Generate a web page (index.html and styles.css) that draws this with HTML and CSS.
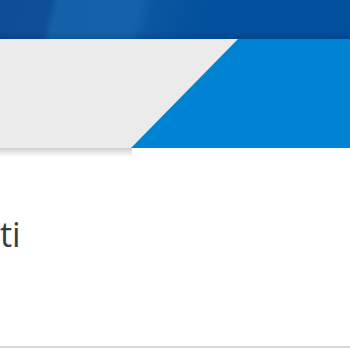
FILE: index.html
```html
<!DOCTYPE html>
<html>
<head>
<meta charset="utf-8">
<link rel="stylesheet" href="styles.css">
</head>
<body>
<div class="topbar"></div>
<div class="hero"><div class="hero-grey"></div></div>
<div class="hero-shadow"></div>
<main class="content">
  <h2 class="title">ti</h2>
</main>
<div class="rule"></div>
</body>
</html>
```
FILE: styles.css
```css
html, body {
  margin: 0;
  padding: 0;
  background: #ffffff;
  width: 350px;
  height: 350px;
  overflow: hidden;
}
.topbar {
  height: 39px;
  background:
    linear-gradient(to bottom, rgba(0,0,0,0) 80%, rgba(0,20,70,0.18) 100%),
    linear-gradient(105deg, #0c4d97 0px, #0d5099 50px, #1561a9 58px, #1562aa 135px, #0b56a0 150px, #03509d 200px, #00509e 100%);
}
.hero {
  height: 109px;
  background: #0082d3;
}
.hero-grey {
  height: 100%;
  background: #ebebeb;
  clip-path: polygon(0 0, 238px 0, 131px 100%, 0 100%);
}
.hero-shadow {
  width: 132px;
  height: 9px;
  background: linear-gradient(to bottom, #cfcfcf, rgba(255,255,255,0));
}
.content {
  box-sizing: border-box;
  padding-top: 57px;
  height: 189px;
}
.title {
  margin: 0;
  font-family: "Open Sans", "Noto Sans", sans-serif;
  font-weight: 400;
  font-size: 34px;
  line-height: 40px;
  color: #3b3b3b;
}
.rule {
  height: 2px;
  background: #d8d8d8;
}
```
